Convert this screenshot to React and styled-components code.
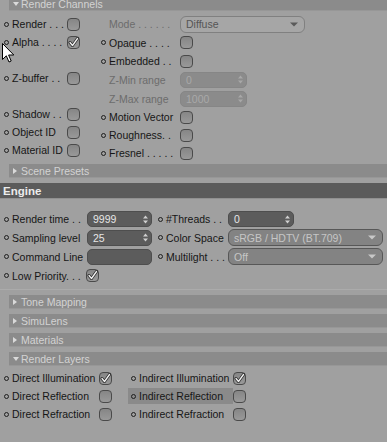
import React from "react";
import styled, { createGlobalStyle } from "styled-components";

const GlobalStyle = createGlobalStyle`
    html, body {
        margin: 0;
        background: #a0a0a0;
        overflow: hidden;
    }
    body {
        font-family: "Liberation Sans", Arial, sans-serif;
        font-size: 10.5px;
        color: #161616;
    }
`;

const Panel = styled.div`
    position: relative;
    width: 387px;
    height: 442px;
    overflow: hidden;
    background: #a0a0a0;
`;

const GroupBar = styled.div`
    display: flex;
    align-items: center;
    height: 14px;
    margin-left: 9px;
    margin-top: ${(p) => p.$mt || 0}px;
    padding-left: 4px;
    background: #8b8b8b;
    color: #d3d3d3;
    box-shadow: inset 0 -1px 0 #979797;
`;

const Arrow = styled.span`
    width: 0;
    height: 0;
    margin-right: ${(p) => (p.$open ? 2 : 4)}px;
    ${(p) =>
        p.$open
            ? `border-left: 3.5px solid transparent;
               border-right: 3.5px solid transparent;
               border-top: 4px solid #dadada;`
            : `border-top: 3.5px solid transparent;
               border-bottom: 3.5px solid transparent;
               border-left: 4px solid #dadada;`}
`;

const SectionBar = styled.div`
    display: flex;
    align-items: center;
    height: 15px;
    margin-top: 5px;
    padding-left: 3px;
    background: #5b5b5b;
    color: #ececec;
    font-size: 11.5px;
    font-weight: bold;
    box-shadow: 0 1px 0 #909090;
`;

const Columns = styled.div`
    display: flex;
    padding-top: ${(p) => p.$pt || 0}px;
`;

const Col = styled.div`
    display: flex;
    flex-direction: column;
    width: ${(p) => p.$w}px;
    padding-left: ${(p) => p.$pl}px;
    box-sizing: border-box;
    flex: none;
`;

const Row = styled.div`
    display: flex;
    align-items: center;
    height: ${(p) => p.$h || 18}px;
`;

const LabelCell = styled.div`
    display: flex;
    align-items: center;
    height: 16px;
    padding-left: ${(p) => p.$pl || 0}px;
    background: ${(p) => (p.$active ? "#8a8a8a" : "transparent")};
`;

const Dot = styled.span`
    width: 5px;
    height: 5px;
    box-sizing: border-box;
    border: 1px solid ${(p) => (p.$hidden ? "transparent" : "#1e1e1e")};
    border-radius: 50%;
    margin-right: 3px;
    flex: none;
`;

const Label = styled.span`
    width: ${(p) => p.$w}px;
    flex: none;
    white-space: nowrap;
    color: ${(p) => (p.$dim ? "#6c6c6c" : "#161616")};
`;

const Box = styled.span`
    display: flex;
    align-items: center;
    justify-content: center;
    width: 13px;
    height: 13px;
    box-sizing: border-box;
    border: 1px solid #4a4a4a;
    border-radius: 4px;
    background: linear-gradient(#868686, #999999);
    flex: none;
`;

const Field = styled.div`
    display: flex;
    align-items: center;
    justify-content: space-between;
    width: ${(p) => p.$w}px;
    height: 16px;
    box-sizing: border-box;
    padding: 0 3px 0 5px;
    border-radius: 5px;
    background: ${(p) => (p.$dim ? "#8b8b8b" : "#5c5c5c")};
    color: ${(p) => (p.$dim ? "#a9a9a9" : "#e6e6e6")};
    border: 1px solid ${(p) => (p.$dim ? "#868686" : "#4e4e4e")};
    flex: none;
`;

const Select = styled.div`
    display: flex;
    align-items: center;
    justify-content: space-between;
    width: ${(p) => p.$w}px;
    height: 17px;
    box-sizing: border-box;
    padding: 0 6px 0 5px;
    border-radius: 6px;
    background: ${(p) => (p.$dim ? "#a6a6a6" : "#838383")};
    color: ${(p) => (p.$dim ? "#555555" : "#c6c6c6")};
    border: 1px solid ${(p) => (p.$dim ? "#808080" : "#575757")};
    flex: none;
`;

const Groups = styled.div`
    margin-top: 4px;
    border-top: 1px solid #ababab;
    padding-top: 5px;
`;

const Cursor = styled.svg`
    position: absolute;
    left: 2px;
    top: 43px;
`;

const Check = () => (
    <svg width="11" height="11" viewBox="0 0 11 11">
        <path d="M2 5.5 L4.5 8.5 L9.5 1.5" fill="none" stroke="#2a2a2a" strokeWidth="3" strokeLinecap="round" strokeLinejoin="round" />
        <path d="M2 5.5 L4.5 8.5 L9.5 1.5" fill="none" stroke="#f2f2f2" strokeWidth="1.3" strokeLinecap="round" strokeLinejoin="round" />
    </svg>
);

const Spinner = ({ color }) => (
    <svg width="5" height="9" viewBox="0 0 5 9">
        <path d="M0 3.5 L2.5 0.5 L5 3.5 Z M0 5.5 L2.5 8.5 L5 5.5 Z" fill={color} />
    </svg>
);

const DropArrow = ({ color }) => (
    <svg width="8" height="5" viewBox="0 0 8 5">
        <path d="M0 0.5 L8 0.5 L4 4.5 Z" fill={color} />
    </svg>
);

const Check13 = ({ checked }) => <Box>{checked && <Check />}</Box>;

const Item = ({ label, w, h, checked, dim, noDot, children }) => (
    <Row $h={h}>
        <Dot $hidden={noDot} />
        <Label $w={w} $dim={dim}>
            {label}
        </Label>
        {children || <Check13 checked={checked} />}
    </Row>
);

const Gap = ({ h = 18 }) => <Row $h={h} />;

export default function App() {
    return (
        <Panel>
            <GlobalStyle />
            <GroupBar $mt={-3}>
                <Arrow $open />
                Render Channels
            </GroupBar>

            <Columns $pt={4}>
                <Col $w={101} $pl={4}>
                    <Item label="Render . . ." w={55} />
                    <Item label="Alpha . . . ." w={55} checked />
                    <Gap />
                    <Item label="Z-buffer . ." w={55} />
                    <Gap />
                    <Item label="Shadow . ." w={55} />
                    <Item label="Object ID" w={55} />
                    <Item label="Material ID" w={55} />
                </Col>
                <Col $w={286} $pl={0}>
                    <Item label="Mode . . . . . ." w={71} dim noDot>
                        <Select $w={125} $dim>
                            Diffuse
                            <DropArrow color="#5a5a5a" />
                        </Select>
                    </Item>
                    <Item label="Opaque . . . ." w={71} h={19} />
                    <Item label="Embedded . ." w={71} />
                    <Item label="Z-Min range" w={71} h={19} dim noDot>
                        <Field $w={67} $dim>
                            0
                            <Spinner color="#a8a8a8" />
                        </Field>
                    </Item>
                    <Item label="Z-Max range" w={71} h={19} dim noDot>
                        <Field $w={67} $dim>
                            1000
                            <Spinner color="#a8a8a8" />
                        </Field>
                    </Item>
                    <Item label="Motion Vector" w={71} />
                    <Item label="Roughness. ." w={71} />
                    <Item label="Fresnel . . . . ." w={71} />
                </Col>
            </Columns>

            <GroupBar $mt={2}>
                <Arrow />
                Scene Presets
            </GroupBar>

            <SectionBar>Engine</SectionBar>

            <Columns $pt={12}>
                <Col $w={158} $pl={4}>
                    <Item label="Render time . ." w={75}>
                        <Field $w={65}>
                            9999
                            <Spinner color="#d0d0d0" />
                        </Field>
                    </Item>
                    <Item label="Sampling level" w={75} h={19}>
                        <Field $w={65}>
                            25
                            <Spinner color="#d0d0d0" />
                        </Field>
                    </Item>
                    <Item label="Command Line" w={75} h={19}>
                        <Field $w={65} />
                    </Item>
                    <Item label="Low Priority. . ." w={74} h={19} checked />
                </Col>
                <Col $w={229} $pl={0}>
                    <Item label="#Threads . ." w={62}>
                        <Field $w={66}>
                            0
                            <Spinner color="#d0d0d0" />
                        </Field>
                    </Item>
                    <Item label="Color Space" w={62} h={19}>
                        <Select $w={155}>
                            sRGB / HDTV (BT.709)
                            <DropArrow color="#c8c8c8" />
                        </Select>
                    </Item>
                    <Item label="Multilight . . ." w={62} h={19}>
                        <Select $w={155}>
                            Off
                            <DropArrow color="#c8c8c8" />
                        </Select>
                    </Item>
                </Col>
            </Columns>

            <Groups>
                <GroupBar>
                    <Arrow />
                    Tone Mapping
                </GroupBar>
                <GroupBar $mt={5}>
                    <Arrow />
                    SimuLens
                </GroupBar>
                <GroupBar $mt={5}>
                    <Arrow />
                    Materials
                </GroupBar>
                <GroupBar $mt={5}>
                    <Arrow $open />
                    Render Layers
                </GroupBar>
            </Groups>

            <Columns $pt={3}>
                <Col $w={128} $pl={4}>
                    <Item label="Direct Illumination" w={87} checked />
                    <Item label="Direct Reflection" w={87} />
                    <Item label="Direct Refraction" w={87} />
                </Col>
                <Col $w={259} $pl={0}>
                    {[
                        ["Indirect Illumination", true, false],
                        ["Indirect Reflection", false, true],
                        ["Indirect Refraction", false, false],
                    ].map(([label, checked, active]) => (
                        <Row key={label}>
                            <LabelCell $pl={3} $active={active}>
                                <Dot />
                                <Label $w={94}>{label}</Label>
                            </LabelCell>
                            <Check13 checked={checked} />
                        </Row>
                    ))}
                </Col>
            </Columns>

            <Cursor width="13" height="21" viewBox="0 0 13 21">
                <path d="M0.5 0.5 L0.5 16.5 L4.3 12.8 L7 19 L9.2 18 L6.6 12 L11.8 12 Z" fill="#ffffff" stroke="#000000" strokeWidth="1" strokeLinejoin="miter" />
            </Cursor>
        </Panel>
    );
}
